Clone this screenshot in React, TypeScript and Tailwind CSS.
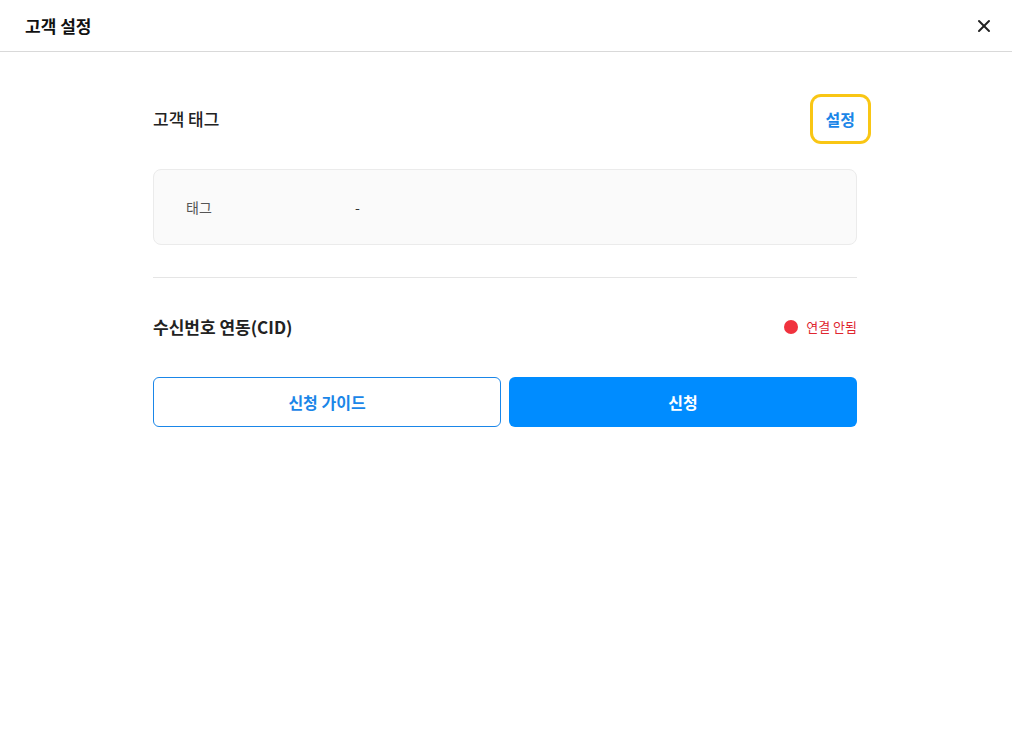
import React from "react";
import { X } from "lucide-react";

export default function App() {
  return (
    <div
      className="w-[1012px] h-[754px] bg-white text-[#222]"
      style={{ fontFamily: '"Noto Sans CJK KR", "Noto Sans", sans-serif' }}
    >
      {/* Header */}
      <div className="h-[52px] flex items-center justify-between pl-[25px] pr-[16px] border-b border-[#d9d9d9]">
        <h1 className="text-[17px] font-bold text-[#111]">고객 설정</h1>
        <button className="p-[2px] text-[#222]">
          <X className="w-[20px] h-[20px]" strokeWidth={2.4} />
        </button>
      </div>

      {/* Body */}
      <div className="w-[704px] ml-[153px] pt-[45px]">
        <div className="flex items-center justify-between">
          <h2 className="text-[17px] font-medium text-[#222]">고객 태그</h2>
          <button className="-mr-[11px] px-[13px] py-[11px] rounded-lg ring-[3px] ring-[#f9c614] text-[16px] font-semibold text-[#1a86e8] leading-[22px]">
            설정
          </button>
        </div>

        <div className="mt-[28px] h-[76px] rounded-lg border border-[#ebebeb] bg-[#fafafa] flex items-center pl-[32px]">
          <span className="w-[169px] text-[14px] text-[#555]">태그</span>
          <span className="text-[14px] text-[#333]">-</span>
        </div>

        <div className="mt-[32px] border-t border-[#e5e5e5]" />

        <div className="mt-[36px] flex items-center justify-between">
          <h2 className="text-[17px] font-semibold text-[#222]">수신번호 연동(CID)</h2>
          <div className="flex items-center gap-[8px]">
            <span className="w-[14px] h-[14px] rounded-full bg-[#f0323e]" />
            <span className="text-[13px] text-[#e0262f]">연결 안됨</span>
          </div>
        </div>

        <div className="mt-[37px] grid grid-cols-2 gap-[8px]">
          <button className="h-[50px] rounded-md border border-[#1a86e8] bg-white text-[16px] font-semibold text-[#1a86e8]">
            신청 가이드
          </button>
          <button className="h-[50px] rounded-md bg-[#008cff] text-[16px] font-semibold text-white">
            신청
          </button>
        </div>
      </div>
    </div>
  );
}
